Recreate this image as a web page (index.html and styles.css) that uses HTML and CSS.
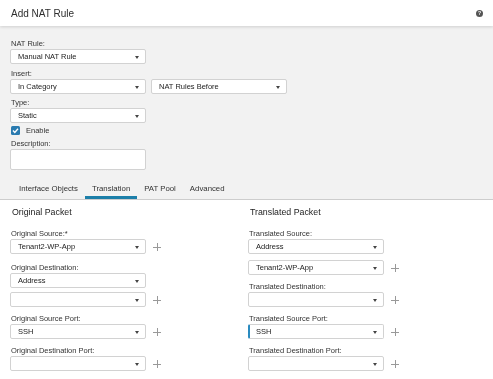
FILE: index.html
```html
<!DOCTYPE html>
<html lang="en">

<head>
    <meta charset="UTF-8">
    <meta name="viewport" content="width=device-width, initial-scale=1.0">
    <title>Add NAT Rule</title>
    <link rel="stylesheet" href="styles.css">
</head>

<body>
    <div class="page">
        <div class="header">
            <h1>Add NAT Rule</h1>
            <span class="help">?</span>
        </div>

        <div class="top">
            <div class="field">
                <div class="lbl">NAT Rule:</div>
                <div class="select">Manual NAT Rule</div>
            </div>
            <div class="field">
                <div class="lbl">Insert:</div>
                <div class="row">
                    <div class="select">In Category</div>
                    <div class="select">NAT Rules Before</div>
                </div>
            </div>
            <div class="field">
                <div class="lbl">Type:</div>
                <div class="select">Static</div>
            </div>
            <div class="check">
                <svg width="9" height="9" viewBox="0 0 9 9">
                    <rect width="9" height="9" rx="1.5" fill="#2a7bb0"/>
                    <path d="M2 4.6 L3.8 6.4 L7 2.8" stroke="#fff" stroke-width="1.4" fill="none"/>
                </svg>
                <span>Enable</span>
            </div>
            <div class="field desc">
                <div class="lbl">Description:</div>
                <div class="textarea"></div>
            </div>

            <ul class="tabs">
                <li>Interface Objects</li>
                <li class="active">Translation</li>
                <li>PAT Pool</li>
                <li>Advanced</li>
            </ul>
        </div>

        <div class="packets">
            <div class="col">
                <h2>Original Packet</h2>
                <div class="field">
                    <div class="lbl">Original Source:*</div>
                    <div class="row"><div class="select">Tenant2-WP-App</div><span class="plus"></span></div>
                </div>
                <div class="field wide">
                    <div class="lbl">Original Destination:</div>
                    <div class="select">Address</div>
                    <div class="row stack"><div class="select"></div><span class="plus"></span></div>
                </div>
                <div class="field">
                    <div class="lbl">Original Source Port:</div>
                    <div class="row"><div class="select">SSH</div><span class="plus"></span></div>
                </div>
                <div class="field">
                    <div class="lbl">Original Destination Port:</div>
                    <div class="row"><div class="select"></div><span class="plus"></span></div>
                </div>
            </div>

            <div class="col">
                <h2>Translated Packet</h2>
                <div class="field">
                    <div class="lbl">Translated Source:</div>
                    <div class="select">Address</div>
                    <div class="row stack2"><div class="select">Tenant2-WP-App</div><span class="plus"></span></div>
                </div>
                <div class="field">
                    <div class="lbl">Translated Destination:</div>
                    <div class="row"><div class="select"></div><span class="plus"></span></div>
                </div>
                <div class="field">
                    <div class="lbl">Translated Source Port:</div>
                    <div class="row"><div class="select focused">SSH</div><span class="plus"></span></div>
                </div>
                <div class="field">
                    <div class="lbl">Translated Destination Port:</div>
                    <div class="row"><div class="select"></div><span class="plus"></span></div>
                </div>
            </div>
        </div>
    </div>
</body>

</html>
```

FILE: styles.css
```css
body {
    margin: 0;
    background-color: #fff;
    font-family: 'Liberation Sans', Arial, sans-serif;
    color: #333;
}

.page {
    will-change: transform;
}

.header {
    display: flex;
    justify-content: space-between;
    align-items: center;
    height: 26px;
    padding: 0 10px 0 11px;
    background-color: #fff;
    box-shadow: 0 1px 3px rgba(0, 0, 0, 0.15);
    position: relative;
}

.header h1 {
    margin: 0;
    font-size: 10px;
    font-weight: normal;
    color: #2e2e2e;
}

.help {
    width: 7px;
    height: 7px;
    border-radius: 50%;
    background-color: #555;
    color: #fff;
    font-size: 5px;
    font-weight: bold;
    line-height: 7px;
    text-align: center;
}

.top {
    background-color: #f2f2f2;
    padding: 12px 10px 0 10px;
}

.lbl {
    font-size: 7.5px;
    line-height: 11px;
    padding-left: 1px;
    color: #333;
}

.field {
    margin-top: 3.5px;
}

.top .field:first-child {
    margin-top: 0;
}

.row {
    display: flex;
    align-items: center;
    gap: 5px;
}

.select {
    position: relative;
    box-sizing: border-box;
    width: 136px;
    height: 15px;
    padding-left: 7px;
    background-color: #fff;
    border: 1px solid #d2d2d2;
    border-radius: 2px;
    font-size: 7.5px;
    line-height: 13px;
    color: #222;
}

.select::after {
    content: "";
    position: absolute;
    right: 6px;
    top: 6px;
    border-left: 2px solid transparent;
    border-right: 2px solid transparent;
    border-top: 3px solid #444;
}

.select.focused {
    border-left: 2px solid #2a8bc0;
    padding-left: 6px;
}

.check {
    display: flex;
    align-items: center;
    gap: 6px;
    margin-top: 2px;
    padding-left: 1px;
    height: 10px;
    font-size: 7.5px;
    color: #333;
}

.check svg {
    display: block;
}

.desc {
    margin-top: 3px;
}

.textarea {
    box-sizing: border-box;
    width: 136px;
    height: 21px;
    background-color: #fff;
    border: 1px solid #d2d2d2;
    border-radius: 2px;
}

.tabs {
    display: flex;
    list-style-type: none;
    margin: 8px -10px 0 -10px;
    padding: 0 0 0 12px;
    border-bottom: 1px solid #cdcdcd;
}

.tabs li {
    padding: 5px 7px 2px 7px;
    font-size: 7.8px;
    line-height: 11px;
    color: #333;
    border-bottom: 3px solid transparent;
}

.tabs li.active {
    border-bottom-color: #1c7fa9;
}

.packets {
    display: grid;
    grid-template-columns: 238px 1fr;
    padding: 7px 10px 0 10px;
}

.packets h2 {
    margin: 0 0 10px 2px;
    font-size: 8.8px;
    font-weight: normal;
    line-height: 11px;
    color: #222;
}

.packets .field {
    margin-top: 6px;
}

.packets .field.wide {
    margin-top: 8px;
}

.stack {
    margin-top: 4px;
}

.stack2 {
    margin-top: 6px;
}

.plus {
    position: relative;
    width: 8px;
    height: 8px;
    margin-left: 2px;
}

.plus::before,
.plus::after {
    content: "";
    position: absolute;
    background-color: #999;
}

.plus::before {
    left: 0;
    top: 4px;
    width: 8px;
    height: 1px;
}

.plus::after {
    left: 4px;
    top: 0;
    width: 1px;
    height: 8px;
}
```
